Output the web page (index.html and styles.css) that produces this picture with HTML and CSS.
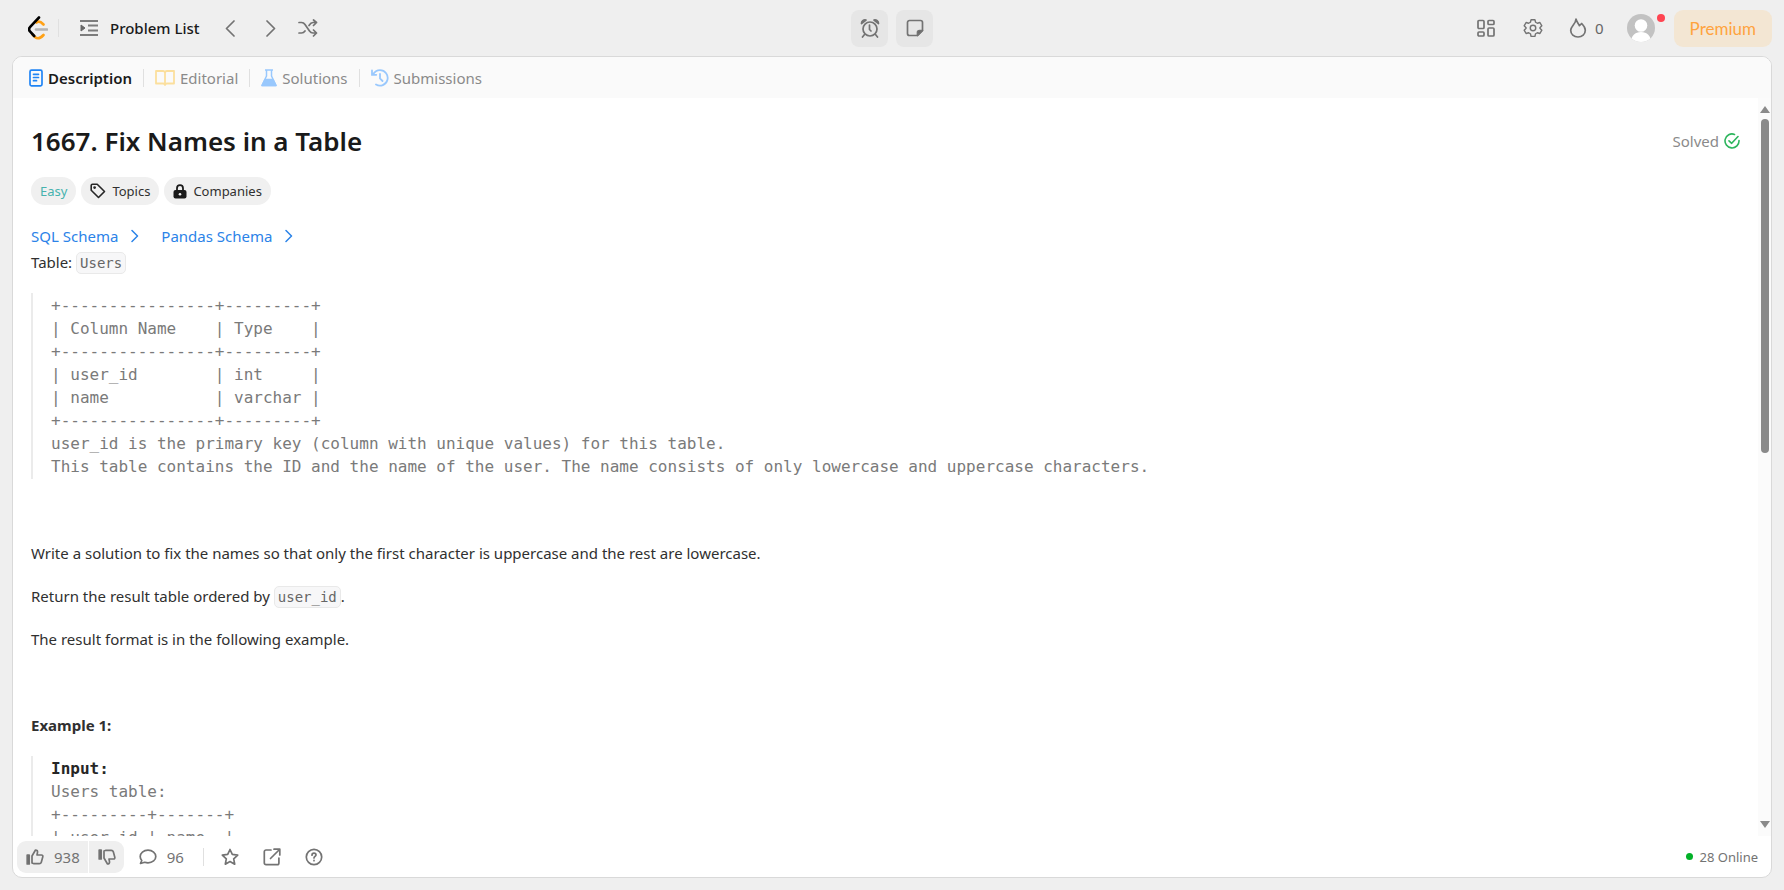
FILE: index.html
```
<!DOCTYPE html>
<html lang="en">
<head>
<meta charset="utf-8">
<title>Fix Names in a Table</title>
<link rel="stylesheet" href="styles.css">
</head>
<body>
<header class="topbar">
  <div class="side">
    <a class="logo" href="#" aria-label="Home">
      <svg width="20" height="24" viewBox="0 0 20 24" fill="none" stroke-width="2.6" stroke-linecap="round" stroke-linejoin="round">
        <path stroke="#ffa116" d="M8.500 6.500c2-1.800 4-1.200 7 2M4.500 18.500l2.500 2.500c2 1.800 5 1.800 8.500-2"/>
        <path stroke="#b3b3b3" d="M8 13.500h11"/>
        <path stroke="#000" d="M11 1.500 2.200 10.800c-1.400 1.500-1.400 3.400 0 4.900l4 4.300"/>
      </svg>
    </a>
    <span class="rule rule-logo"></span>
    <a class="list-link" href="#">
      <svg width="18" height="18" viewBox="0 0 18 18" fill="none" stroke="#7c7c7c" stroke-width="2"><path d="M0 2h18M8 6.500h10M8 11.500h10M0 16h18"/><path d="M1 6l4 3-4 3z" fill="#666" stroke="#666" stroke-width="1"/></svg>
      <span>Problem List</span>
    </a>
    <button class="plain" aria-label="Previous"><svg width="10" height="17" viewBox="0 0 10 17" class="line"><path d="M9 1 1.500 8.500 9 16"/></svg></button>
    <button class="plain" aria-label="Next"><svg width="10" height="17" viewBox="0 0 10 17" class="line"><path d="M1 1l7.500 7.500L1 16"/></svg></button>
    <button class="plain shuffle" aria-label="Random"><svg width="20" height="18" viewBox="0 0 20 18" class="line"><path d="M1 3.500h2.500c1.500 0 2.500.500 3.500 2l4.500 6.500c1 1.500 2 2 3.500 2h3.500M1 14h2.500c1.500 0 2.500-.500 3.500-2M11 6.500c1.200-2 2.500-3 4-3h3.500M15.500 1l3 2.500-3 3M15.500 11l3 3-3 3"/></svg></button>
  </div>
  <div class="middle">
    <button class="tool" aria-label="Timer"><svg width="20" height="20" viewBox="0 0 20 20" class="line"><circle cx="10" cy="11" r="7"/><path d="M9.500 7v4.500l1.500 1.500M4.500 16.500 2.500 19M15.500 16.500l2 2.500"/><path d="M1.500 5.500c0-2.500 2-4 4.500-3.500zM18.500 5.500c0-2.500-2-4-4.500-3.500z" fill="#7c7c7c"/></svg></button>
    <button class="tool" aria-label="Notes"><svg width="18" height="18" viewBox="0 0 18 18" class="line"><path d="M11.500 16.500H3.500a2 2 0 0 1-2-2v-11a2 2 0 0 1 2-2h11a2 2 0 0 1 2 2v8z"/><path d="M11.500 16.500v-3a2 2 0 0 1 2-2h3z" fill="#666"/></svg></button>
  </div>
  <div class="side side-end">
    <button class="plain" aria-label="Layouts"><svg width="18" height="18" viewBox="0 0 18 18" class="line"><rect x="1" y="1.500" width="6" height="8" rx="1"/><rect x="11" y="1.500" width="6" height="4" rx="1"/><rect x="1" y="13" width="6" height="4" rx="1"/><rect x="11" y="9" width="6" height="8" rx="1"/></svg></button>
    <button class="plain gear" aria-label="Settings"><svg width="20" height="20" viewBox="0 0 24 24" class="line"><circle cx="12" cy="12" r="3.300"/><path d="M9.700 2h4.600l.8 3.100 2.100 1.200 3.100-.9 2.300 4-2.300 2.200v.8l2.300 2.200-2.300 4-3.100-.9-2.100 1.200-.8 3.100H9.700l-.8-3.100-2.100-1.200-3.100.9-2.300-4 2.300-2.200v-.8L1.400 9.400l2.300-4 3.100.9 2.100-1.200z"/></svg></button>
    <button class="plain streak"><svg width="18" height="20" viewBox="0 0 18 20" class="line"><path d="M7 1c.6 2.800 2.300 4.300 3.400 6.700l2.300-2.200c2 2 3.600 4.100 3.600 6.800 0 4-3.200 6.700-7.300 6.700s-7.300-2.700-7.300-6.700C1.700 8.300 7 6 7 1z"/></svg><span>0</span></button>
    <button class="plain profile" aria-label="Profile"><svg width="28" height="28" viewBox="0 0 28 28"><defs><clipPath id="face"><circle cx="14" cy="14" r="14"/></clipPath></defs><g clip-path="url(#face)"><path fill="#c2c2c2" d="M0 0h28v28H0z"/><circle cx="14" cy="11.500" r="6.300" fill="#fff"/><path fill="#fff" d="M4 28c0-6 4-10 10-10s10 4 10 10z"/></g></svg><span class="alert"></span></button>
    <a class="premium" href="#">Premium</a>
  </div>
</header>

<main class="panel">
  <nav class="tabs">
    <a class="tab tab-on" href="#"><svg width="14" height="18" viewBox="0 0 14 18" fill="none" stroke="#1f84f5" stroke-width="1.700" stroke-linecap="round"><rect x="1" y="1.200" width="12" height="15.600" rx="1.500"/><path d="M4.500 5.300h5M4.500 8.500h5M4.500 11.700h3"/></svg><span>Description</span></a>
    <span class="rule"></span>
    <a class="tab" href="#"><svg width="20" height="16" viewBox="0 0 20 16" fill="none" stroke="#fbdf9d" stroke-width="1.800" stroke-linejoin="round"><path d="M10 3c0-1.200-.8-2-2-2H1v12.500h7c1.200 0 2 .5 2 1.500 0-1 .8-1.500 2-1.500h7V1h-7c-1.200 0-2 .8-2 2zM10 3v12"/></svg><span>Editorial</span></a>
    <span class="rule"></span>
    <a class="tab" href="#"><svg width="16" height="18" viewBox="0 0 16 18" fill="none" stroke="#99c8fd" stroke-width="1.500" stroke-linejoin="round"><path d="M4 1h8M5.500 1v6L1 16.500h14L10.500 7V1"/><path fill="#99c8fd" d="M4 10.500h8l3 6H1z"/></svg><span>Solutions</span></a>
    <span class="rule"></span>
    <a class="tab" href="#"><svg width="18" height="18" viewBox="0 0 18 18" fill="none" stroke="#99c8fd" stroke-width="1.800" stroke-linecap="round"><path d="M2 5.500C3.500 2.800 6 1.200 9 1.200a7.700 7.700 0 1 1-4 14.300M1 1.500v4.300h4.300M9 5v4.500l2.500 2.500"/></svg><span>Submissions</span></a>
  </nav>

  <div class="scroller">
    <article class="content">
      <div class="heading">
        <h1>1667. Fix Names in a Table</h1>
        <div class="solved"><span>Solved</span><svg width="16" height="16" viewBox="0 0 16 16" fill="none" stroke="#2db55d" stroke-width="1.600" stroke-linecap="round" stroke-linejoin="round"><path d="M10.500 1.400A7 7 0 1 0 15 7.500M5 7.800l2.700 2.500L14 3.500"/></svg></div>
      </div>
      <div class="pills">
        <span class="pill easy">Easy</span>
        <button class="pill"><svg width="16" height="16" viewBox="0 0 16 16" fill="none" stroke="#262626" stroke-width="1.600" stroke-linejoin="round"><path d="M1.200 2.500c0-.8.500-1.300 1.300-1.300h4.700l7.300 7.300-6 6-7.300-7.300z"/><circle cx="4.600" cy="4.600" r=".6" fill="#262626"/></svg>Topics</button>
        <button class="pill"><svg width="14" height="15" viewBox="0 0 14 15"><path fill="none" stroke="#1a1a1a" stroke-width="1.800" d="M4 7V4.200a3 3 0 0 1 6 0V7"/><rect x=".500" y="6" width="13" height="8.500" rx="2" fill="#1a1a1a"/><circle cx="7" cy="10.200" r="1.300" fill="#efefef"/></svg>Companies</button>
      </div>
      <div class="schemas">
        <a href="#">SQL Schema<svg width="8" height="14" viewBox="0 0 8 14"><path d="M1 1.500 6.500 7 1 12.500"/></svg></a>
        <a href="#">Pandas Schema<svg width="8" height="14" viewBox="0 0 8 14"><path d="M1 1.500 6.500 7 1 12.500"/></svg></a>
      </div>
      <div class="statement">
        <p>Table: <code>Users</code></p>
<pre>+----------------+---------+
| Column Name    | Type    |
+----------------+---------+
| user_id        | int     |
| name           | varchar |
+----------------+---------+
user_id is the primary key (column with unique values) for this table.
This table contains the ID and the name of the user. The name consists of only lowercase and uppercase characters.</pre>
        <p>&nbsp;</p>
        <p>Write a solution to fix the names so that only the first character is uppercase and the rest are lowercase.</p>
        <p>Return the result table ordered by <code>user_id</code>.</p>
        <p>The result format is in the following example.</p>
        <p>&nbsp;</p>
        <p><strong>Example 1:</strong></p>
<pre><strong>Input:</strong>
Users table:
+---------+-------+
| user_id | name  |</pre>
      </div>
    </article>
    <div class="scrollbar"><span class="arrow up"></span><span class="track"><span class="thumb"></span></span><span class="arrow down"></span></div>
  </div>

  <footer class="actions">
    <div class="votes">
      <button class="vote"><svg width="18" height="16" viewBox="0 0 18 16" class="line"><path d="M6 14V7l3.500-6c1.500 0 2.200 1 2 2.300L11 6h4.500c1 0 1.600.8 1.300 1.800l-1.500 5.400c-.3 1-1 1.500-2 1.500H8z"/><path fill="#666" d="M1.200 6h2v9h-2z"/></svg><span>938</span></button>
      <button class="vote" aria-label="Dislike"><svg width="18" height="16" viewBox="0 0 18 16" class="line"><path d="M6 2v7l3.500 6c1.500 0 2.200-1 2-2.300L11 10h4.500c1 0 1.600-.8 1.300-1.800l-1.500-5.400c-.3-1-1-1.500-2-1.500H8z"/><path fill="#666" d="M1.200 1h2v9h-2z"/></svg></button>
    </div>
    <button class="plain comments"><svg width="18" height="16" viewBox="0 0 18 16" class="line"><path d="M1.500 14.500l1.300-3C1.800 10.500 1.200 9 1.200 7.500 1.200 4 4.500 1.200 9 1.200s7.800 2.800 7.800 6.300-3.300 6.300-7.800 6.300c-1.200 0-2.300-.2-3.300-.5z"/></svg><span>96</span></button>
    <span class="rule"></span>
    <button class="plain" aria-label="Favourite"><svg width="18" height="18" viewBox="0 0 18 18" class="line"><path d="M9 1.500l2.300 4.900 5.400.7-4 3.700 1 5.400L9 13.600l-4.700 2.600 1-5.400-4-3.700 5.400-.7z"/></svg></button>
    <button class="plain" aria-label="Share"><svg width="18" height="18" viewBox="0 0 18 18" class="line"><path d="M8 2H3a1.700 1.700 0 0 0-1.700 1.700v11.200A1.700 1.700 0 0 0 3 16.600h11.200a1.700 1.700 0 0 0 1.700-1.700V10M7.500 10.500l9-9M11 1.200h5.800V7"/></svg></button>
    <button class="plain" aria-label="Help"><svg width="18" height="18" viewBox="0 0 18 18" class="line"><circle cx="9" cy="9" r="7.700"/><path d="M7 7.200c0-1.200.9-2 2-2s2 .8 2 1.800c0 1.200-2 1.500-2 2.900M9 12.400v.3"/></svg></button>
    <div class="online"><span class="dot"></span>28 Online</div>
  </footer>
</main>
</body>
</html>
```
FILE: styles.css
```
* { box-sizing: border-box; }

body {
  margin: 0;
  height: 100vh;
  display: flex;
  flex-direction: column;
  padding: 0 12px 12px;
  background: #efefef;
  color: #303030;
  font: 15px/26px "Noto Sans", "Open Sans", sans-serif;
}

a { color: inherit; text-decoration: none; }
svg { display: block; flex: none; }
button { font: inherit; color: inherit; border: 0; padding: 0; margin: 0; }

.line {
  fill: none;
  stroke: #737373;
  stroke-width: 1.7;
  stroke-linecap: round;
  stroke-linejoin: round;
}

.plain { display: flex; align-items: center; background: none; }
.rule { width: 1px; height: 18px; background: #e0e0e0; }

/* Top bar */
.topbar { display: flex; align-items: center; height: 56px; flex: none; }
.side { flex: 1; display: flex; align-items: center; }
.side-end { justify-content: flex-end; }
.logo { margin-left: 16px; }
.rule-logo { margin: 0 21px 0 10px; }
.list-link { display: flex; align-items: center; gap: 12px; margin-right: 25px; font-weight: 500; color: #1a1a1a; }
.side .plain + .plain { margin-left: 31px; }
.side .plain + .shuffle { margin-left: 22px; }
.middle { display: flex; gap: 8px; }
.tool {
  width: 37px;
  height: 37px;
  display: flex;
  align-items: center;
  justify-content: center;
  border-radius: 8px;
  background: #e6e6e6;
}
.side .plain + .gear { margin-left: 28px; }
.side .plain + .streak { margin-left: 26px; gap: 8px; color: #666; }
.side .plain + .profile { position: relative; margin-left: 23px; }
.alert {
  position: absolute;
  top: 0;
  right: -10px;
  width: 8px;
  height: 8px;
  border-radius: 50%;
  background: #ff4552;
}
.premium {
  margin-left: 19px;
  padding: 5px 16px;
  border-radius: 9px;
  background: #f3e6d3;
  color: #ffa33e;
  font: 17px/27px Lato, sans-serif;
}

/* Panel */
.panel {
  flex: 1;
  min-height: 0;
  display: flex;
  flex-direction: column;
  border: 1px solid #d9d9d9;
  border-radius: 10px;
  background: #fff;
  overflow: hidden;
}
.tabs {
  display: flex;
  align-items: center;
  gap: 11px;
  height: 41px;
  flex: none;
  padding: 0 16px;
  background: #fafafa;
  color: #8a8a8a;
}
.tab { display: flex; align-items: center; gap: 5px; }
.tab-on { color: #1a1a1a; font-weight: 600; }

.scroller { flex: 1; min-height: 0; display: flex; }
.content { flex: 1; min-width: 0; overflow: hidden; padding: 25px 18px 0; }
.heading { display: flex; align-items: center; justify-content: space-between; }
h1 { margin: 0; font-size: 26px; line-height: 36px; font-weight: 600; color: #1a1a1a; }
.solved { display: flex; align-items: center; gap: 5px; color: #8a8a8a; }

.pills { display: flex; gap: 5px; margin-top: 18px; }
.pill {
  display: flex;
  align-items: center;
  gap: 6px;
  height: 28px;
  padding: 0 9px;
  border-radius: 14px;
  background: #f0f0f0;
  font-size: 13px;
}
.easy { color: #46b3ae; }

.schemas { display: flex; gap: 22px; margin-top: 18px; color: #2b83e8; }
.schemas a { display: flex; align-items: center; gap: 13px; }
.schemas path { fill: none; stroke: #2b83e8; stroke-width: 1.5; stroke-linecap: round; stroke-linejoin: round; }

.statement p { margin: 0 0 17px; }
code {
  display: inline-block;
  padding: 0 3px;
  border: 1px solid #e9e9e9;
  border-radius: 5px;
  background: #f7f7f8;
  color: #666;
  font: 14px/20px "DejaVu Sans Mono", monospace;
}
pre {
  margin: 18px 0;
  padding: 1px 0 1px 18px;
  border-left: 2px solid #ebebeb;
  color: #7a7a7a;
  font: 16px/23px "DejaVu Sans Mono", monospace;
}
pre strong { color: #262626; }

.scrollbar {
  width: 13px;
  display: flex;
  flex-direction: column;
  align-items: center;
  padding: 8px 0;
  background: #fbfbfb;
}
.arrow { border: 5px solid transparent; }
.up { border-top: 0; border-bottom: 7px solid #8a8a8a; }
.down { border-bottom: 0; border-top: 7px solid #8a8a8a; }
.track { flex: 1; width: 8px; padding: 6px 0; }
.thumb { display: block; height: 48%; border-radius: 4px; background: #8a8a8a; }

/* Bottom bar */
.actions {
  display: flex;
  align-items: center;
  gap: 24px;
  height: 41px;
  flex: none;
  padding: 0 13px 0 4px;
  color: #737373;
}
.votes { display: flex; gap: 1px; border-radius: 9px; overflow: hidden; }
.vote { display: flex; align-items: center; gap: 10px; height: 32px; padding: 0 8px 0 9px; background: #efefef; }
.comments { gap: 10px; }
.votes + .comments { margin-left: -9px; }
.actions .rule { margin: 0 -7px 0 -5px; }
.online { display: flex; align-items: center; gap: 6px; margin-left: auto; font-size: 13px; }
.dot { width: 7px; height: 7px; border-radius: 50%; background: #02b128; }
```
